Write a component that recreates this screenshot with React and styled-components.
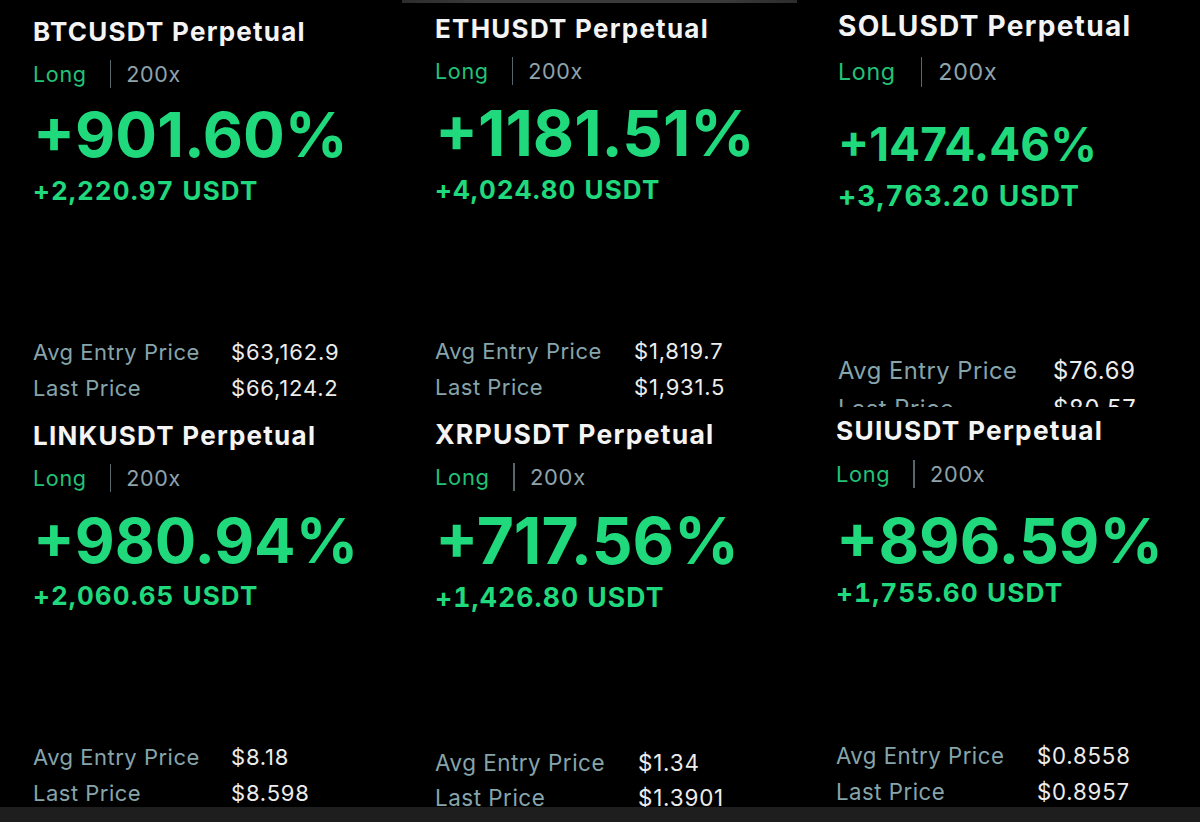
import React from 'react'
import styled, { createGlobalStyle } from 'styled-components'

const GlobalStyle = createGlobalStyle`
    html, body {
        margin: 0;
        padding: 0;
        background: #000;
    }
    body {
        font-family: Inter, "Noto Sans", sans-serif;
        -webkit-font-smoothing: antialiased;
    }
`

const Page = styled.div`
    width: 1200px;
    height: 822px;
    background: #000;
    display: flex;
    flex-direction: column;
    overflow: hidden;
`

const Grid = styled.div`
    display: grid;
    grid-template-columns: 400px 400px 400px;
    grid-template-rows: 407px 400px;
`

const BottomBar = styled.div`
    height: 15px;
    background: #1e1e1e;
`

const Panel = styled.div`
    --s: ${p => p.$s};
    overflow: hidden;
`

const TopStrip = styled.div`
    height: 3px;
    margin: 0 3px 0 2px;
    background: linear-gradient(90deg, #2c2c2c, #3a3a3a 20%, #3a3a3a 80%, #2c2c2c);
`

const Body = styled.div`
    padding-top: ${p => p.$top}px;
    padding-left: ${p => p.$left}px;
`

const Title = styled.div`
    font-size: calc(26px * var(--s));
    line-height: 32px;
    font-weight: 700;
    letter-spacing: 1.25px;
    color: #f4f4f4;
    white-space: nowrap;
`

const Meta = styled.div`
    display: flex;
    align-items: center;
    height: 28px;
    margin-top: ${p => p.$mt}px;
    font-size: calc(21.5px * var(--s));
    letter-spacing: 0.7px;
`

const Side = styled.span`
    color: #22c277;
`

const Divider = styled.span`
    width: 1.5px;
    height: calc(28px * var(--s));
    background: #56666c;
    margin: 0 calc(15px * var(--s)) 0 calc(23px * var(--s));
`

const Leverage = styled.span`
    color: #8ea3ab;
`

const Percent = styled.div`
    font-size: ${p => p.$size}px;
    line-height: 72px;
    font-weight: 700;
    color: #20d97c;
    margin-top: ${p => p.$mt}px;
    white-space: nowrap;
`

const Pnl = styled.div`
    font-size: calc(26px * var(--s));
    line-height: 30px;
    font-weight: 700;
    letter-spacing: 1.1px;
    font-variant-numeric: tabular-nums;
    color: #20d97c;
    margin-top: ${p => p.$mt}px;
    white-space: nowrap;
`

const Stats = styled.div`
    display: grid;
    grid-template-columns: ${p => p.$col}px auto;
    grid-auto-rows: ${p => p.$row}px;
    align-items: center;
    margin-top: ${p => p.$mt}px;
    font-size: calc(22px * var(--s));
    letter-spacing: 0.5px;
    white-space: nowrap;
`

const Label = styled.span`
    color: #86a5ab;
`

const Value = styled.span`
    color: #ececec;
    letter-spacing: 0.8px;
`

const positions = [
    { sym: 'BTCUSDT', pct: '+901.60%', pnl: '+2,220.97', avg: '$63,162.9', last: '$66,124.2',
      left: 33, s: 1, pctSize: 62, col: 198, row: 35.5, t: 32, m: 74, p: 135, u: 191, a: 352 },
    { sym: 'ETHUSDT', pct: '+1181.51%', pnl: '+4,024.80', avg: '$1,819.7', last: '$1,931.5', strip: true,
      left: 35, s: 1, pctSize: 63.5, col: 199, row: 36, t: 28.5, m: 71, p: 133, u: 190, a: 350.5 },
    { sym: 'SOLUSDT', pct: '+1474.46%', pnl: '+3,763.20', avg: '$76.69', last: '$80.57',
      left: 38, s: 1.08, pctSize: 46, col: 215, row: 38, t: 26, m: 72, p: 144, u: 196, a: 370.5 },
    { sym: 'LINKUSDT', pct: '+980.94%', pnl: '+2,060.65', avg: '$8.18', last: '$8.598',
      left: 33, s: 1, pctSize: 61.5, col: 198, row: 35.5, t: 29, m: 71, p: 134, u: 189, a: 350 },
    { sym: 'XRPUSDT', pct: '+717.56%', pnl: '+1,426.80', avg: '$1.34', last: '$1.3901',
      left: 35, s: 1.02, pctSize: 64, col: 203, row: 35, t: 27, m: 70, p: 134, u: 190, a: 355 },
    { sym: 'SUIUSDT', pct: '+896.59%', pnl: '+1,755.60', avg: '$0.8558', last: '$0.8957',
      left: 36, s: 1.01, pctSize: 62.5, col: 201, row: 36.5, t: 24, m: 67, p: 133, u: 186, a: 348 },
]

const Position = ({ d }) => (
    <Panel $s={d.s}>
        {d.strip && <TopStrip/>}
        <Body $top={d.t - 16 - (d.strip ? 3 : 0)} $left={d.left}>
            <Title>{d.sym} Perpetual</Title>
            <Meta $mt={d.m - d.t - 30}>
                <Side>Long</Side>
                <Divider/>
                <Leverage>200x</Leverage>
            </Meta>
            <Percent $size={d.pctSize} $mt={d.p - d.m - 14 - 36}>{d.pct}</Percent>
            <Pnl $mt={d.u - d.p - 36 - 15}>{d.pnl} USDT</Pnl>
            <Stats $col={d.col} $row={d.row} $mt={d.a - d.u - 15 - d.row / 2}>
                <Label>Avg Entry Price</Label>
                <Value>{d.avg}</Value>
                <Label>Last Price</Label>
                <Value>{d.last}</Value>
            </Stats>
        </Body>
    </Panel>
)

const App = () => (
    <Page>
        <GlobalStyle/>
        <Grid>
            {positions.map(d => <Position key={d.sym} d={d}/>)}
        </Grid>
        <BottomBar/>
    </Page>
)

export default App
